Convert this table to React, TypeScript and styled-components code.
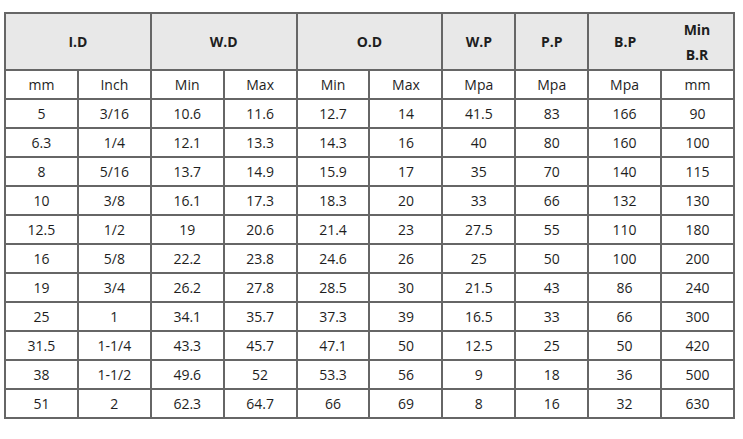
import React from 'react';
import styled, { createGlobalStyle } from 'styled-components';

const rows = [
    ['5', '3/16', '10.6', '11.6', '12.7', '14', '41.5', '83', '166', '90'],
    ['6.3', '1/4', '12.1', '13.3', '14.3', '16', '40', '80', '160', '100'],
    ['8', '5/16', '13.7', '14.9', '15.9', '17', '35', '70', '140', '115'],
    ['10', '3/8', '16.1', '17.3', '18.3', '20', '33', '66', '132', '130'],
    ['12.5', '1/2', '19', '20.6', '21.4', '23', '27.5', '55', '110', '180'],
    ['16', '5/8', '22.2', '23.8', '24.6', '26', '25', '50', '100', '200'],
    ['19', '3/4', '26.2', '27.8', '28.5', '30', '21.5', '43', '86', '240'],
    ['25', '1', '34.1', '35.7', '37.3', '39', '16.5', '33', '66', '300'],
    ['31.5', '1-1/4', '43.3', '45.7', '47.1', '50', '12.5', '25', '50', '420'],
    ['38', '1-1/2', '49.6', '52', '53.3', '56', '9', '18', '36', '500'],
    ['51', '2', '62.3', '64.7', '66', '69', '8', '16', '32', '630']
];

const units = ['mm', 'Inch', 'Min', 'Max', 'Min', 'Max', 'Mpa', 'Mpa', 'Mpa', 'mm'];

const GlobalStyle = createGlobalStyle`
  body {
    margin: 0;
    background: #ffffff;
    font-family: "Open Sans", "Noto Sans", sans-serif;
  }
`;

const Page = styled.div`
  padding: 12px 0 0 4px;
`;

const Table = styled.table`
  border-collapse: collapse;
  table-layout: fixed;
  width: 729px;
  color: #1e1e1e;
  font-size: 14px;
`;

const HeadCell = styled.th<{ $noRight?: boolean; $noLeft?: boolean }>`
  height: 55px;
  padding: 0;
  background: #e8e8e8;
  border: 2px solid #666;
  ${p => p.$noRight && 'border-right: none;'}
  ${p => p.$noLeft && 'border-left: none;'}
  font-weight: 700;
  font-size: 14px;
  line-height: 25px;
  text-align: center;
  vertical-align: middle;
`;

const Cell = styled.td`
  height: 27px;
  padding: 0;
  border: 2px solid #666;
  text-align: center;
  vertical-align: middle;
  line-height: 20px;
`;

const App: React.FC = () => {
    return (
        <Page>
            <GlobalStyle />
            <Table>
                <colgroup>
                    {units.map((_, i) => (
                        <col key={i} style={{ width: '72.9px' }} />
                    ))}
                </colgroup>
                <thead>
                    <tr>
                        <HeadCell colSpan={2}>I.D</HeadCell>
                        <HeadCell colSpan={2}>W.D</HeadCell>
                        <HeadCell colSpan={2}>O.D</HeadCell>
                        <HeadCell>W.P</HeadCell>
                        <HeadCell>P.P</HeadCell>
                        <HeadCell $noRight>B.P</HeadCell>
                        <HeadCell $noLeft>Min<br />B.R</HeadCell>
                    </tr>
                </thead>
                <tbody>
                    <tr>
                        {units.map((u, i) => (
                            <Cell key={i}>{u}</Cell>
                        ))}
                    </tr>
                    {rows.map((row, r) => (
                        <tr key={r}>
                            {row.map((v, i) => (
                                <Cell key={i}>{v}</Cell>
                            ))}
                        </tr>
                    ))}
                </tbody>
            </Table>
        </Page>
    );
};

export default App;
